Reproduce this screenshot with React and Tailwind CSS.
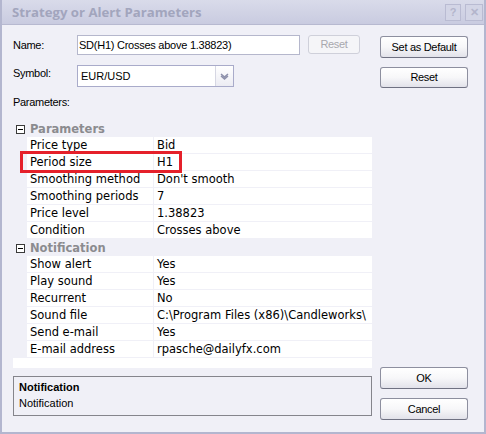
import React from 'react';

const paramRows = [
  ['Price type', 'Bid'],
  ['Period size', 'H1'],
  ['Smoothing method', "Don't smooth"],
  ['Smoothing periods', '7'],
  ['Price level', '1.38823'],
  ['Condition', 'Crosses above'],
];

const notifyRows = [
  ['Show alert', 'Yes'],
  ['Play sound', 'Yes'],
  ['Recurrent', 'No'],
  ['Sound file', 'C:\\Program Files (x86)\\Candleworks\\'],
  ['Send e-mail', 'Yes'],
  ['E-mail address', 'rpasche@dailyfx.com'],
];

const WinButton = ({ children, className = '', disabled }) => (
  <button
    disabled={disabled}
    className={`rounded-[3px] border text-[11px] leading-none tracking-[-0.3px] ${
      disabled
        ? 'border-[#cfd0da] bg-[#f5f5f8] text-[#a8a8ae]'
        : 'border-[#8d8f9f] border-b-[#6f7182] bg-gradient-to-b from-white via-[#f7f7f9] to-[#e2e2ea] text-black'
    } ${className}`}
  >
    {children}
  </button>
);

const Category = ({ label }) => (
  <div className="flex h-[17px] items-center">
    <div className="w-[14px] h-full flex items-center justify-center pl-[1px] pt-[2px]">
      <div className="w-[9px] h-[9px] border border-[#3a3a3a] bg-white flex items-center justify-center">
        <div className="w-[5px] h-px bg-black" />
      </div>
    </div>
    <span className="pl-[3px] pt-[1px] text-[11.5px] font-bold text-[#8b8b8f] leading-[17px]">{label}</span>
  </div>
);

const PropRow = ({ name, value }) => (
  <div className="flex h-[17px]">
    <div className="w-[14px]" />
    <div className="w-[126px] h-[16px] bg-white pl-[3px] pt-[1px] leading-[15px] whitespace-nowrap overflow-hidden">{name}</div>
    <div className="w-[1px]" />
    <div className="flex-1 h-[16px] bg-white pl-[3px] pt-[1px] leading-[15px] whitespace-nowrap overflow-hidden">{value}</div>
  </div>
);

export default function App() {
  return (
    <div className="w-[486px] h-[434px] flex flex-col bg-[#f0f0f7] border-l-2 border-r-2 border-b-2 border-[#b3b6cf] [font-family:'Liberation_Sans',Arial,sans-serif] text-[11px] text-black overflow-hidden">
      {/* Title bar */}
      <div className="h-[25px] flex items-start bg-gradient-to-b from-[#d9dbea] to-[#c9cbe0] border-b border-[#b7b9d0]">
        <span className="pl-[10px] pt-[3px] text-[13.2px] font-bold text-[#a2a5bd] [font-family:'Open_Sans',sans-serif] leading-[18px]">
          Strategy or Alert Parameters
        </span>
        <div className="ml-auto flex gap-[4px] mt-[4px] mr-[1px]">
          <div className="w-[16px] h-[17px] border border-[#b9bbd2] bg-[#d3d5e6] flex items-center justify-center text-[11px] font-bold text-[#b3b5cc]">?</div>
          <div className="w-[18px] h-[17px] border border-[#b9bbd2] bg-[#d3d5e6] flex items-center justify-center text-[11px] font-bold text-[#b3b5cc]">✕</div>
        </div>
      </div>

      {/* Body */}
      <div className="flex flex-1 pl-[11px]">
        {/* Left column */}
        <div className="w-[359px] flex flex-col pt-[10px] tracking-[-0.3px]">
          <div className="flex h-[20px] items-start">
            <span className="w-[64px] leading-[16px] pt-[2px]">Name:</span>
            <div className="w-[223px] h-[20px] border border-[#b5b7cc] bg-white pl-[1px] flex items-center tracking-[-0.25px] whitespace-nowrap overflow-hidden">
              SD(H1) Crosses above 1.38823)
            </div>
            <WinButton disabled className="ml-[8px] w-[52px] h-[19px]">Reset</WinButton>
          </div>

          <div className="flex h-[22px] mt-[10px] items-start">
            <span className="w-[64px] leading-[16px]">Symbol:</span>
            <div className="w-[157px] h-[22px] border border-[#a9abca] bg-white flex">
              <span className="flex-1 pl-[3px] flex items-center tracking-normal">EUR/USD</span>
              <div className="w-[18px] h-full border-l border-[#d6d7e3] bg-gradient-to-b from-white to-[#ececf3] flex items-center justify-center">
                <svg width="9" height="7" viewBox="0 0 9 7">
                  <path d="M1 1 L4.5 4 L8 1 M1 3 L4.5 6 L8 3" stroke="#8d90ab" strokeWidth="1.5" fill="none" />
                </svg>
              </div>
            </div>
          </div>

          <span className="mt-[7px] leading-[16px]">Parameters:</span>

          {/* Property grid */}
          <div className="relative mt-[7px] h-[251px] flex flex-col pt-[3px] [font-family:'DejaVu_Sans',Verdana,sans-serif] text-[11.5px] tracking-normal">
            <Category label="Parameters" />
            {paramRows.map(([n, v]) => (
              <PropRow key={n} name={n} value={v} />
            ))}
            <Category label="Notification" />
            {notifyRows.map(([n, v]) => (
              <PropRow key={n} name={n} value={v} />
            ))}
            <div className="flex-1 bg-white" />
            <div className="absolute left-[7px] top-[34px] w-[162px] h-[22px] border-[3px] border-[#e5202a]" />
          </div>

          {/* Help pane */}
          <div className="mt-[8px] h-[40px] border border-[#85858c] pl-[5px] pt-[2px] flex flex-col tracking-normal">
            <span className="font-bold leading-[16px]">Notification</span>
            <span className="leading-[16px]">Notification</span>
          </div>
        </div>

        {/* Right column */}
        <div className="ml-[8px] w-[88px] flex flex-col pt-[11px]">
          <WinButton className="h-[22px]">Set as Default</WinButton>
          <WinButton className="h-[21px] mt-[9px]">Reset</WinButton>
          <WinButton className="h-[22px] mt-[279px]">OK</WinButton>
          <WinButton className="h-[22px] mt-[9px]">Cancel</WinButton>
        </div>
      </div>
    </div>
  );
}
